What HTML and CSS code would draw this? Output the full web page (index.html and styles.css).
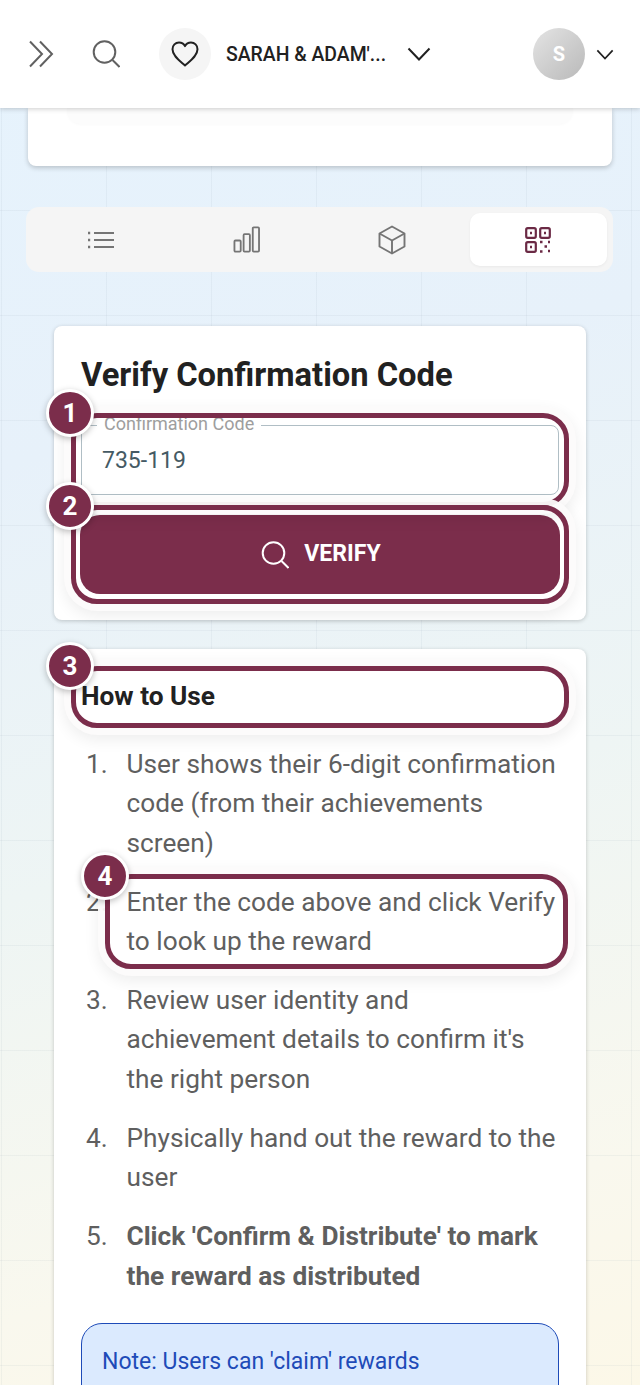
FILE: index.html
```html
<!DOCTYPE html>
<html lang="en">
<head>
<meta charset="utf-8">
<title>Verify Confirmation Code</title>
<link rel="stylesheet" href="styles.css">
</head>
<body>
<div class="screen">
  <header class="topbar">
    <svg class="ico-expand" viewBox="0 0 26 28" fill="none" stroke="#616161" stroke-width="2"><path d="M2 1.500l12 12.500L2 26.500"/><path d="M12 1.500l12 12.500-12 12.500"/></svg>
    <svg class="ico-search" viewBox="0 0 28 28" fill="none" stroke="#616161" stroke-width="2"><circle cx="12.500" cy="12" r="10.800"/><path d="M20.500 20l7 7"/></svg>
    <div class="heart-wrap">
      <svg class="ico-heart" viewBox="0 0 28 26" fill="none" stroke="#212121" stroke-width="2" stroke-linejoin="round"><path d="M14 24.500C9 20 1.500 15 1.500 8.200 1.500 4.400 4.400 1.500 8 1.500c2.500 0 4.800 1.300 6 3.600 1.200-2.300 3.500-3.600 6-3.600 3.600 0 6.500 2.900 6.500 6.700C26.500 15 19 20 14 24.500z"/></svg>
    </div>
    <span class="wedding-name">SARAH &amp; ADAM'...</span>
    <svg class="ico-chev-lg" viewBox="0 0 24 14" fill="none" stroke="#212121" stroke-width="2"><path d="M1.500 1.500L12 12.500 22.500 1.500"/></svg>
    <div class="user">
      <div class="avatar">S</div>
      <svg class="ico-chev-sm" viewBox="0 0 20 12" fill="none" stroke="#212121" stroke-width="1.900"><path d="M1.500 1.500L10 10.500l8.500-9"/></svg>
    </div>
  </header>

  <main class="content">
    <section class="top-card"><div class="top-card-inner"></div></section>

    <nav class="tabs">
      <div class="tab">
        <svg class="tab-ico ico-list" viewBox="0 0 26 18" fill="none" stroke="#757575" stroke-width="2"><path d="M6 2h20M6 9h20M6 16h20"/><path d="M0 2h2.200M0 9h2.200M0 16h2.200" stroke-width="2.400"/></svg>
      </div>
      <div class="tab">
        <svg class="tab-ico ico-bars" viewBox="0 0 28 28" fill="none" stroke="#757575" stroke-width="1.900" stroke-linejoin="round"><rect x="1.500" y="15" width="6.500" height="11.500" rx="1"/><rect x="11" y="8.500" width="6.500" height="18" rx="1"/><rect x="20.500" y="1.500" width="6.500" height="25" rx="1"/></svg>
      </div>
      <div class="tab">
        <svg class="tab-ico ico-cube" viewBox="0 0 28 30" fill="none" stroke="#757575" stroke-width="1.900" stroke-linejoin="round"><path d="M14 1.500L26.500 8.500v13L14 28.500 1.500 21.500v-13z"/><path d="M1.500 8.500L14 15.500 26.500 8.500M14 15.500v13"/></svg>
      </div>
      <div class="tab tab-active">
        <svg class="tab-ico ico-qr" viewBox="0 0 26 26" fill="none" stroke="#6b2a45" stroke-width="2.200"><rect x="1.200" y="1.200" width="9.600" height="9.600" rx="1.500"/><rect x="15.200" y="1.200" width="9.600" height="9.600" rx="1.500"/><rect x="1.200" y="15.200" width="9.600" height="9.600" rx="1.500"/><path d="M5 6h2M19 6h2M5 20h2M15 15h2.500M23 15h2M19.500 19.500h2.500M15 24.500h2.500M23 24h2" stroke-width="2.600"/></svg>
      </div>
    </nav>

    <section class="card card-verify">
      <h2 class="card-title">Verify Confirmation Code</h2>
      <div class="field">
        <span class="field-label">Confirmation Code</span>
        <span class="field-value">735-119</span>
      </div>
      <button class="verify-btn" type="button">
        <svg class="ico-verify" viewBox="0 0 28 28" fill="none" stroke="#fff" stroke-width="2"><circle cx="12.500" cy="12" r="10.800"/><path d="M20.500 20l7 7"/></svg>
        <span>VERIFY</span>
      </button>
    </section>

    <section class="card card-help">
      <h3 class="help-title">How to Use</h3>
      <ol class="steps">
        <li class="step"><span class="step-num">1.</span><span class="step-text">User shows their 6-digit confirmation code (from their achievements screen)</span></li>
        <li class="step"><span class="step-num">2.</span><span class="step-text">Enter the code above and click Verify to look up the reward</span></li>
        <li class="step"><span class="step-num">3.</span><span class="step-text">Review user identity and achievement details to confirm it's the right person</span></li>
        <li class="step"><span class="step-num">4.</span><span class="step-text">Physically hand out the reward to the user</span></li>
        <li class="step"><span class="step-num">5.</span><strong class="step-text">Click 'Confirm &amp; Distribute' to mark the reward as distributed</strong></li>
      </ol>
      <div class="note">Note: Users can 'claim' rewards</div>
    </section>
  </main>

  <div class="ring ring-1"></div>
  <div class="badge badge-1">1</div>
  <div class="ring ring-2"></div>
  <div class="badge badge-2">2</div>
  <div class="ring ring-3"></div>
  <div class="badge badge-3">3</div>
  <div class="ring ring-4"></div>
  <div class="badge badge-4">4</div>
</div>
</body>
</html>
```
FILE: styles.css
```css
* { box-sizing: border-box; }
html, body { margin: 0; padding: 0; }
body {
  width: 640px;
  height: 1385px;
  overflow: hidden;
  font-family: Roboto, "Liberation Sans", sans-serif;
}
.screen {
  position: relative;
  width: 640px;
  height: 1385px;
  overflow: hidden;
  background-color: #eef5f5;
  background-image:
    linear-gradient(rgba(120, 140, 160, 0.08) 1.5px, transparent 1.5px),
    linear-gradient(90deg, rgba(120, 140, 160, 0.08) 1.5px, transparent 1.5px),
    linear-gradient(165deg, #e6f3fd 0%, #e7f1fa 30%, #eef5f4 58%, #f9f8ee 85%, #fcf8e8 100%);
  background-size: 105px 105px, 105px 105px, 100% 100%;
  background-position: 0 0, 1px 0, 0 0;
}

/* Header */
.topbar {
  position: relative;
  z-index: 2;
  height: 108px;
  background: #fff;
  box-shadow: 0 1px 5px rgba(0, 0, 0, 0.2);
  display: flex;
  align-items: center;
  padding: 0 26px 0 28px;
}
.ico-expand { width: 26px; height: 28px; flex: none; }
.ico-search { width: 28px; height: 28px; flex: none; margin-left: 38px; }
.heart-wrap {
  width: 52px;
  height: 52px;
  flex: none;
  margin-left: 39px;
  border-radius: 50%;
  background: #f5f5f5;
  display: flex;
  align-items: center;
  justify-content: center;
}
.ico-heart { width: 28px; height: 26px; }
.wedding-name {
  margin-left: 15px;
  font-size: 19.400px;
  font-weight: 500;
  color: #212121;
  white-space: nowrap;
  width: 160px;
}
.ico-chev-lg { width: 24px; height: 14px; flex: none; margin-left: 21px; }
.user { margin-left: auto; display: flex; align-items: center; gap: 11px; }
.avatar {
  width: 52px;
  height: 52px;
  border-radius: 50%;
  background: linear-gradient(135deg, #e4e4e4, #b9b9b9);
  color: #fff;
  font-size: 20px;
  font-weight: 700;
  display: flex;
  align-items: center;
  justify-content: center;
}
.ico-chev-sm { width: 18px; height: 11px; flex: none; }

/* Flow content */
.content { padding: 0 26px; }
.top-card {
  margin: 0 2px;
  height: 58px;
  background: #fff;
  border-radius: 0 0 8px 8px;
  box-shadow: 0 2px 5px rgba(0, 0, 0, 0.2);
  padding: 0 39px;
}
.top-card-inner {
  height: 16px;
  border-radius: 0 0 14px 14px;
  background: #fcfcfc;
  box-shadow: 0 1px 3px rgba(0, 0, 0, 0.025);
}
.tabs {
  margin: 41px 1px 0 0;
  height: 65px;
  background: #f5f5f5;
  border-radius: 13px;
  display: grid;
  grid-template-columns: repeat(4, 1fr);
  gap: 9px;
  padding: 6px 6px 6px 5px;
}
.tab { display: flex; align-items: center; justify-content: center; border-radius: 10px; }
.tab-active { background: #fff; box-shadow: 0 1px 3px rgba(0, 0, 0, 0.05); }
.tab-ico { width: 27px; height: 27px; }
.ico-list { width: 26px; height: 18px; margin-left: 3px; }
.ico-bars { margin-left: 2px; }
.ico-cube { width: 28px; height: 30px; }
.ico-qr { width: 26px; height: 26px; }

/* Cards */
.card {
  margin: 54px 28px 0;
  padding: 26px 27px;
  background: #fff;
  border-radius: 8px;
  box-shadow: 0 1px 4px rgba(0, 0, 0, 0.2);
}
.card-verify { height: 294px; }
.card-help { margin-top: 29px; padding-top: 28px; }
.card-title {
  margin: 0;
  font-size: 32.700px;
  line-height: 44px;
  font-weight: 700;
  color: #212121;
  padding-top: 1px;
}
.field {
  position: relative;
  margin-top: 28px;
  height: 70px;
  border: 1.500px solid #b0bec5;
  border-radius: 8px;
  padding: 0 20px;
  display: flex;
  align-items: center;
}
.field-label {
  position: absolute;
  left: 15px;
  top: -12px;
  padding: 0 7px;
  background: #fff;
  font-size: 18px;
  line-height: 20px;
  color: #9e9e9e;
}
.field-value { font-size: 23px; color: #455a64; }
.verify-btn {
  margin: 20px 0 0 -1px;
  width: 480px;
  height: 79px;
  border: 0;
  border-radius: 20px;
  background: #7b2d4b;
  color: #fff;
  font-family: inherit;
  font-size: 23px;
  font-weight: 700;
  display: flex;
  align-items: center;
  justify-content: center;
  gap: 15px;
  padding: 0 0 3px 2px;
}
.ico-verify { width: 28px; height: 28px; margin-top: 3px; }
.help-title {
  margin: 0;
  font-size: 26.250px;
  line-height: 39.400px;
  font-weight: 700;
  color: #212121;
}
.steps { list-style: none; margin: 28.400px 0 0; padding: 0; }
.step {
  display: flex;
  margin-bottom: 19.700px;
  font-size: 26.250px;
  line-height: 39.375px;
  color: #5f5f5f;
}
.step-num { width: 45.500px; flex: none; padding-left: 5px; }
.step-text { flex: 1; }
.note {
  margin-top: 26.600px;
  height: 120px;
  padding: 18px 20px;
  border: 1.500px solid #1e4bb8;
  border-radius: 21px;
  background: #dbeafe;
  color: #1e4bb8;
  font-size: 23px;
  line-height: 39px;
}

/* Tutorial annotations laid over the page */
.ring {
  position: absolute;
  z-index: 1;
  border: 5px solid #7b2d4b;
  border-radius: 26px;
  box-shadow: 0 0 0 7px rgba(252, 251, 251, 0.95), 0 5px 15px 7px rgba(0, 0, 0, 0.07);
}
.ring-1 { left: 71px; top: 413px; width: 498px; height: 94px; }
.ring-2 { left: 71px; top: 505px; width: 498px; height: 99px; }
.ring-3 { left: 71px; top: 666px; width: 498px; height: 62px; }
.ring-4 { left: 105px; top: 874px; width: 463px; height: 95px; }
.badge {
  position: absolute;
  z-index: 1;
  width: 48px;
  height: 48px;
  border: 3.500px solid #fff;
  border-radius: 50%;
  background: #7b2d4b;
  color: #fff;
  font-size: 26px;
  font-weight: 700;
  display: flex;
  align-items: center;
  justify-content: center;
  box-shadow: 0 2px 6px rgba(0, 0, 0, 0.25);
}
.badge-1 { left: 46px; top: 389px; }
.badge-2 { left: 46px; top: 482px; }
.badge-3 { left: 46px; top: 642px; }
.badge-4 { left: 81px; top: 852px; }
```
